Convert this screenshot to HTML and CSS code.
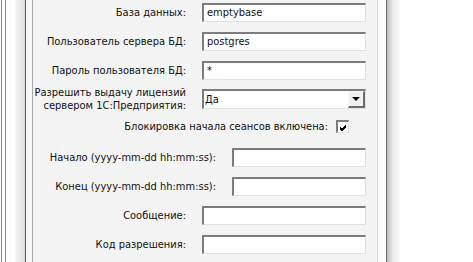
FILE: index.html
```html
<!DOCTYPE html>
<html>
<head>
<title> Параметры информационной базы </title>
<link rel="stylesheet" href="styles.css">
</head>
<body>
<div class="edge-left"></div>
<div class="panel">
	<div class="row">
		<label> База данных: </label>
		<div class="field">emptybase</div>
	</div>
	<div class="row">
		<label> Пользователь сервера БД: </label>
		<div class="field">postgres</div>
	</div>
	<div class="row">
		<label> Пароль пользователя БД: </label>
		<div class="field">*</div>
	</div>
	<div class="row row-select">
		<label> Разрешить выдачу лицензий<br>сервером 1С:Предприятия: </label>
		<div class="field select">
			<span>Да</span>
			<div class="drop"><div class="arrow"></div></div>
		</div>
	</div>
	<div class="row row-check">
		<label> Блокировка начала сеансов включена: </label>
		<div class="check">
			<svg width="9" height="9" viewBox="0 0 9 9"><path d="M1 4 L3 6 L7 2 M1 5 L3 7 L7 3 M1 6 L3 8 L7 4" stroke="#000" stroke-width="1" fill="none" shape-rendering="crispEdges"/></svg>
		</div>
	</div>
	<div class="row">
		<label> Начало (yyyy-mm-dd hh:mm:ss): </label>
		<div class="field short"></div>
	</div>
	<div class="row">
		<label> Конец (yyyy-mm-dd hh:mm:ss): </label>
		<div class="field short"></div>
	</div>
	<div class="row">
		<label> Сообщение: </label>
		<div class="field"></div>
	</div>
	<div class="row">
		<label> Код разрешения: </label>
		<div class="field"></div>
	</div>
</div>
<div class="edge-right"></div>
</body>
</html>
```

FILE: styles.css
```css
html, body { margin: 0; height: 262px; overflow: hidden; }
body { display: flex; background-color: white; font-family: "DejaVu Sans Condensed", "DejaVu Sans", sans-serif; font-stretch: condensed; font-size: 11px; color: #111; }
.edge-left { flex: 0 0 34px; background: linear-gradient(to right, white 0, white 1px, #7f8496 1px, #7f8496 2px, white 2px, white 5px, #7f8496 5px, #7f8496 6px, white 6px, white 15px, #eef1ee 16px, #dfe2df 24px, #d0d2d0 25px, #5e5e5e 25px, #5e5e5e 26px, #f7f7f7 26px, #f7f7f7 32px, #a8a8a8 32px, #a8a8a8 33px, #f4f4f4 33px); }
.panel { flex: 0 0 343px; min-width: 0; background-color: #f4f4f4; padding: 3px 11px 0 0; box-sizing: border-box; display: flex; flex-direction: column; gap: 10px; }
.edge-right { flex: 0 0 24px; background: linear-gradient(to right, #dadada 0, #dadada 1px, #fdfdfd 1px, #fdfdfd 9px, #6a6a6a 9px, #6a6a6a 10px, #bdbdbd 10px, #ebebeb 16px, white 24px); }
.row { display: flex; align-items: center; justify-content: flex-end; gap: 16px; height: 19px; flex: 0 0 auto; }
.row label { text-align: right; white-space: nowrap; line-height: 13px; }
.field { width: 164px; height: 19px; box-sizing: border-box; background: white; border-top: 2px solid #7c7c7c; border-left: 2px solid #7c7c7c; border-right: 1px solid #e2e2e2; border-bottom: 1px solid #e2e2e2; padding: 1px 0 0 3px; line-height: 14px; white-space: nowrap; overflow: hidden; }
.field.short { width: 134px; }
.row-select { height: 20px; margin-top: -1px; }
.select { height: 20px; display: flex; justify-content: space-between; padding: 0; line-height: 17px; }
.select span { padding-left: 1px; }
.drop { width: 17px; height: 17px; box-sizing: border-box; background: #f0f0f0; border-top: 1px solid #f8f8f8; border-left: 1px solid #f8f8f8; border-right: 2px solid #6c6c6c; border-bottom: 2px solid #6c6c6c; display: flex; align-items: center; justify-content: center; }
.arrow { width: 0; height: 0; border-left: 4px solid transparent; border-right: 4px solid transparent; border-top: 4px solid black; }
.row-check { gap: 8px; padding-right: 17px; margin-top: -2px; margin-bottom: 2px; }
.check { width: 13px; height: 13px; box-sizing: border-box; background: white; border-top: 2px solid #7c7c7c; border-left: 2px solid #7c7c7c; border-right: 1px solid #e2e2e2; border-bottom: 1px solid #e2e2e2; display: flex; align-items: center; justify-content: center; }
```
